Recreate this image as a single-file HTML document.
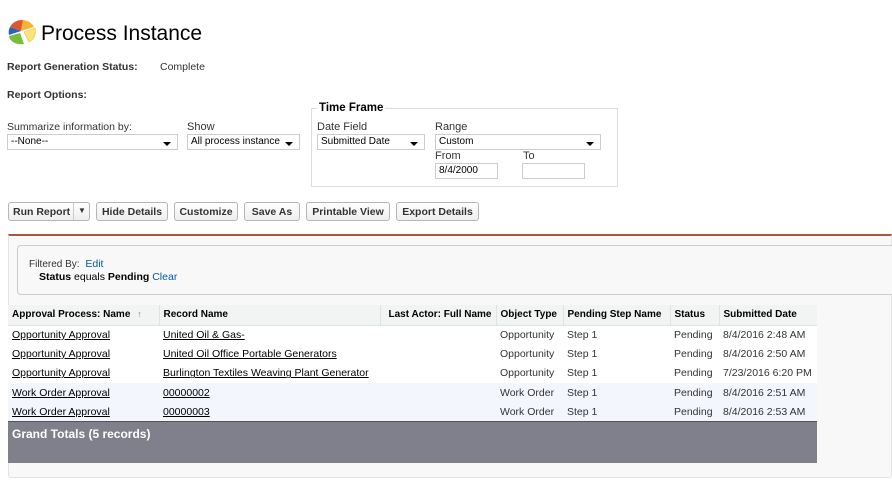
<!DOCTYPE html>
<html><head><meta charset="utf-8"><style>
*{box-sizing:border-box;margin:0;padding:0}
body{width:892px;height:480px;background:#fff;font-family:"Liberation Sans",Arial,sans-serif;font-size:11px;color:#222;position:relative;overflow:hidden}
.a{position:absolute;white-space:nowrap}
.b{font-weight:bold;color:#333}
.sel{position:absolute;height:16px;border:1px solid #ccc;background:#fff;font-size:10px;padding:1px 3px;color:#000;white-space:nowrap;overflow:hidden}
.sel:after{content:"";position:absolute;right:6px;top:7px;border-left:4px solid transparent;border-right:4px solid transparent;border-top:4px solid #000}
.sel.n:after{display:none}
.btn{position:absolute;top:202px;height:19px;border:1px solid #b5b5b5;border-radius:3px;background:linear-gradient(#fff,#eee);font-weight:bold;font-size:10.5px;color:#333;padding:3px 0 0;text-align:center;white-space:nowrap}
.lbl{font-size:11px;color:#333}
table{position:absolute;left:8px;top:305px;width:809px;border-collapse:collapse;font-size:10.5px;table-layout:fixed}
th,td{white-space:nowrap;overflow:hidden}
th{background:#f2f3f3;height:20px;text-align:left;padding:0 4px;font-weight:bold;color:#000;border-right:1px solid #e0e3e5;border-bottom:1px solid #e0e3e5;font-size:10px}
td{height:19.4px;padding:0 4px;color:#333}
td a{color:#000;text-decoration:underline}
tr.w td{background:#fff}
tr.g td{background:#f3f6fc}
</style></head><body>
<svg class="a" style="left:7px;top:18px" width="29" height="28" viewBox="0 0 29 28">
<path d="M14 13 L3 9 A13 12 0 0 1 16 2 Z" fill="#e0582a"/>
<path d="M14 13 L16 2 A13 12 0 0 1 27 9 Z" fill="#f4b43a"/>
<path d="M14 13 L3 9 A13 12 0 0 0 2 17 Z" fill="#2c63b5"/>
<path d="M13 15 L2 18 A12 9 0 0 0 17 26 Z" fill="#7dbb3c"/>
<path d="M17 14 L28 10 A12 12 0 0 1 22 24 Z" fill="#fbe27a" stroke="#e7c24a" stroke-width=".6"/>
</svg>
<div class="a" style="left:41px;top:22px;font-size:21px;color:#000">Process Instance</div>
<div class="a b" style="left:7px;top:61px;font-size:10.5px">Report Generation Status:</div>
<div class="a" style="left:160px;top:61px;color:#333;font-size:10.5px">Complete</div>
<div class="a b" style="left:7px;top:89px;font-size:10.5px">Report Options:</div>
<div class="a lbl" style="left:7px;top:121px;font-size:10.5px">Summarize information by:</div>
<div class="sel" style="left:7px;top:134px;width:171px">--None--</div>
<div class="a lbl" style="left:187px;top:121px">Show</div>
<div class="sel" style="left:187px;top:134px;width:113px">All process instance</div>
<div class="a" style="left:311px;top:108px;width:307px;height:79px;border:1px solid #ddd"></div>
<div class="a b" style="left:317px;top:102px;background:#fff;padding:0 2px;color:#000;font-size:11.5px">Time Frame</div>
<div class="a lbl" style="left:317px;top:121px">Date Field</div>
<div class="sel" style="left:317px;top:134px;width:108px">Submitted Date</div>
<div class="a lbl" style="left:435px;top:121px">Range</div>
<div class="sel" style="left:435px;top:134px;width:166px">Custom</div>
<div class="a lbl" style="left:435px;top:150px">From</div>
<div class="a lbl" style="left:523px;top:150px">To</div>
<div class="sel n" style="left:435px;top:163px;width:63px">8/4/2000</div>
<div class="a" style="left:522px;top:163px;width:63px;height:16px;border:1px solid #ccc"></div>
<div class="btn" style="left:8px;width:82px;text-align:left;padding-left:4px">Run Report<span style="position:absolute;left:64px;top:0;height:17px;border-left:1px solid #ccc;width:17px;text-align:center;font-size:8px;padding-top:3px">▼</span></div>
<div class="btn" style="left:96px;width:72px">Hide Details</div>
<div class="btn" style="left:174px;width:64px">Customize</div>
<div class="btn" style="left:244px;width:56px">Save As</div>
<div class="btn" style="left:306px;width:84px">Printable View</div>
<div class="btn" style="left:396px;width:83px">Export Details</div>
<div class="a" style="left:8px;top:234px;width:884px;height:244px;background:#f8f8f8;border:1px solid #e3e3e3;border-top:2px solid #a85548;border-radius:0 0 3px 3px"></div>
<div class="a" style="left:17px;top:245px;width:880px;height:50px;border:1px solid #ccc;border-radius:4px;background:#f8f8f8"></div>
<div class="a" style="left:29px;top:258px;color:#333;font-size:10px">Filtered By: <span style="color:#015ba7;font-size:10.5px;margin-left:3px">Edit</span></div>
<div class="a" style="left:39px;top:271px;color:#000;font-size:10.5px"><b>Status</b> equals <b>Pending</b> <span style="color:#015ba7">Clear</span></div>
<table>
<colgroup><col style="width:151px"><col style="width:221px"><col style="width:116px"><col style="width:67px"><col style="width:107px"><col style="width:49px"><col></colgroup>
<tr><th>Approval Process: Name <span style="color:#888;font-size:9px;margin-left:4px">↑</span></th><th>Record Name</th><th style="text-align:right">Last Actor: Full Name</th><th>Object Type</th><th>Pending Step Name</th><th>Status</th><th style="border-right:0">Submitted Date</th></tr>
<tr class="w"><td><a>Opportunity Approval</a></td><td><a>United Oil &amp; Gas-</a></td><td></td><td>Opportunity</td><td>Step 1</td><td>Pending</td><td>8/4/2016 2:48 AM</td></tr>
<tr class="w"><td><a>Opportunity Approval</a></td><td><a>United Oil Office Portable Generators</a></td><td></td><td>Opportunity</td><td>Step 1</td><td>Pending</td><td>8/4/2016 2:50 AM</td></tr>
<tr class="w"><td><a>Opportunity Approval</a></td><td><a>Burlington Textiles Weaving Plant Generator</a></td><td></td><td>Opportunity</td><td>Step 1</td><td>Pending</td><td>7/23/2016 6:20 PM</td></tr>
<tr class="g"><td><a>Work Order Approval</a></td><td><a>00000002</a></td><td></td><td>Work Order</td><td>Step 1</td><td>Pending</td><td>8/4/2016 2:51 AM</td></tr>
<tr class="g"><td><a>Work Order Approval</a></td><td><a>00000003</a></td><td></td><td>Work Order</td><td>Step 1</td><td>Pending</td><td>8/4/2016 2:53 AM</td></tr>
</table>
<div class="a" style="left:8px;top:421px;width:809px;height:42px;background:#7f808b;border-top:1px solid #555"></div>
<div class="a" style="left:12px;top:427px;color:#fff;font-weight:bold;font-size:12px">Grand Totals (5 records)</div>
</body></html>
